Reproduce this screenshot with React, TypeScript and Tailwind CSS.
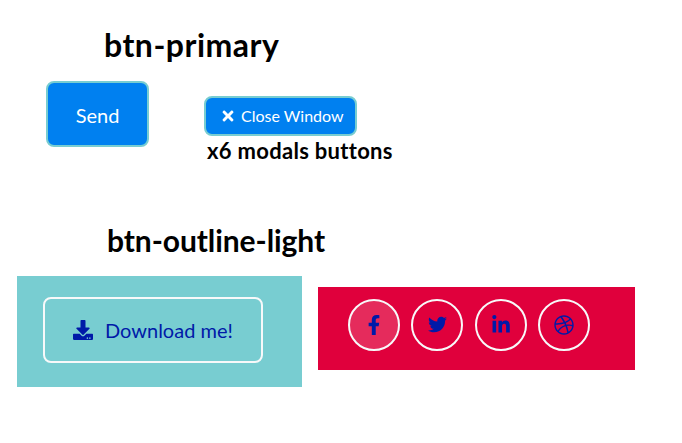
import type { ReactNode } from "react";
import { FaDownload, FaDribbble, FaFacebookF, FaLinkedinIn, FaTimes, FaTwitter } from "react-icons/fa";

function Social({ label, active, className = "", children }: { label: string; active?: boolean; className?: string; children: ReactNode }) {
  return (
    <button
      aria-label={label}
      className={`flex size-[52px] shrink-0 items-center justify-center rounded-full border-2 border-[#f8f9fa] pb-px text-[#001aa8] ${active ? "bg-[#e52b5c]" : ""} ${className}`}
    >
      {children}
    </button>
  );
}

export default function App() {
  return (
    <main className="h-[443px] w-[682px] overflow-hidden bg-white font-['Lato',sans-serif] text-black">
      <h1 className="ml-[104px] pt-[25px] text-[32px] leading-10 font-bold tracking-[0.5px] whitespace-nowrap">btn-primary</h1>
      <section className="mt-4 ml-[46px] flex h-[134px] items-start">
        <button className="flex h-[66px] w-[103px] items-center justify-center rounded-lg border-2 border-[#78cdd1] bg-[#0080f0] pt-0.5 text-xl text-white">
          Send
        </button>
        <div className="mt-[15px] ml-[55px]">
          <button className="flex h-10 w-[153px] items-center rounded-lg border-2 border-[#78cdd1] bg-[#0080f0] pl-3.5 text-base whitespace-nowrap text-white">
            <FaTimes className="mr-[5px] h-4 w-4" />
            <span>Close Window</span>
          </button>
          <p className="mt-px ml-[3px] text-[22px] leading-7 font-bold tracking-[0.3px] whitespace-nowrap">x6 modals buttons</p>
        </div>
      </section>
      <h2 className="mt-[5px] ml-[107px] text-[30px] leading-10 font-bold tracking-[-0.08px] whitespace-nowrap">btn-outline-light</h2>
      <section className="mt-4 ml-[17px] flex items-start gap-4">
        <div className="h-[111px] w-[285px] bg-[#78cdd1] pt-[21px] pl-[26px]">
          <button className="flex h-[66px] w-[220px] items-center rounded-lg border-2 border-[#f8f9fa] pl-7 text-xl whitespace-nowrap text-[#001aa8]">
            <FaDownload className="mr-3 size-5" />
            <span>Download me!</span>
          </button>
        </div>
        <div className="mt-[11px] flex h-[83px] w-[317px] bg-[#e0003c] pt-3 pl-[30px]">
          <Social label="Facebook" active><FaFacebookF className="size-5" /></Social>
          <Social label="Twitter" className="ml-[11px] pl-px"><FaTwitter className="size-[19px]" /></Social>
          <Social label="LinkedIn" className="ml-3"><FaLinkedinIn className="size-5" /></Social>
          <Social label="Dribbble" className="ml-[11px]"><FaDribbble className="size-5" /></Social>
        </div>
      </section>
    </main>
  );
}
